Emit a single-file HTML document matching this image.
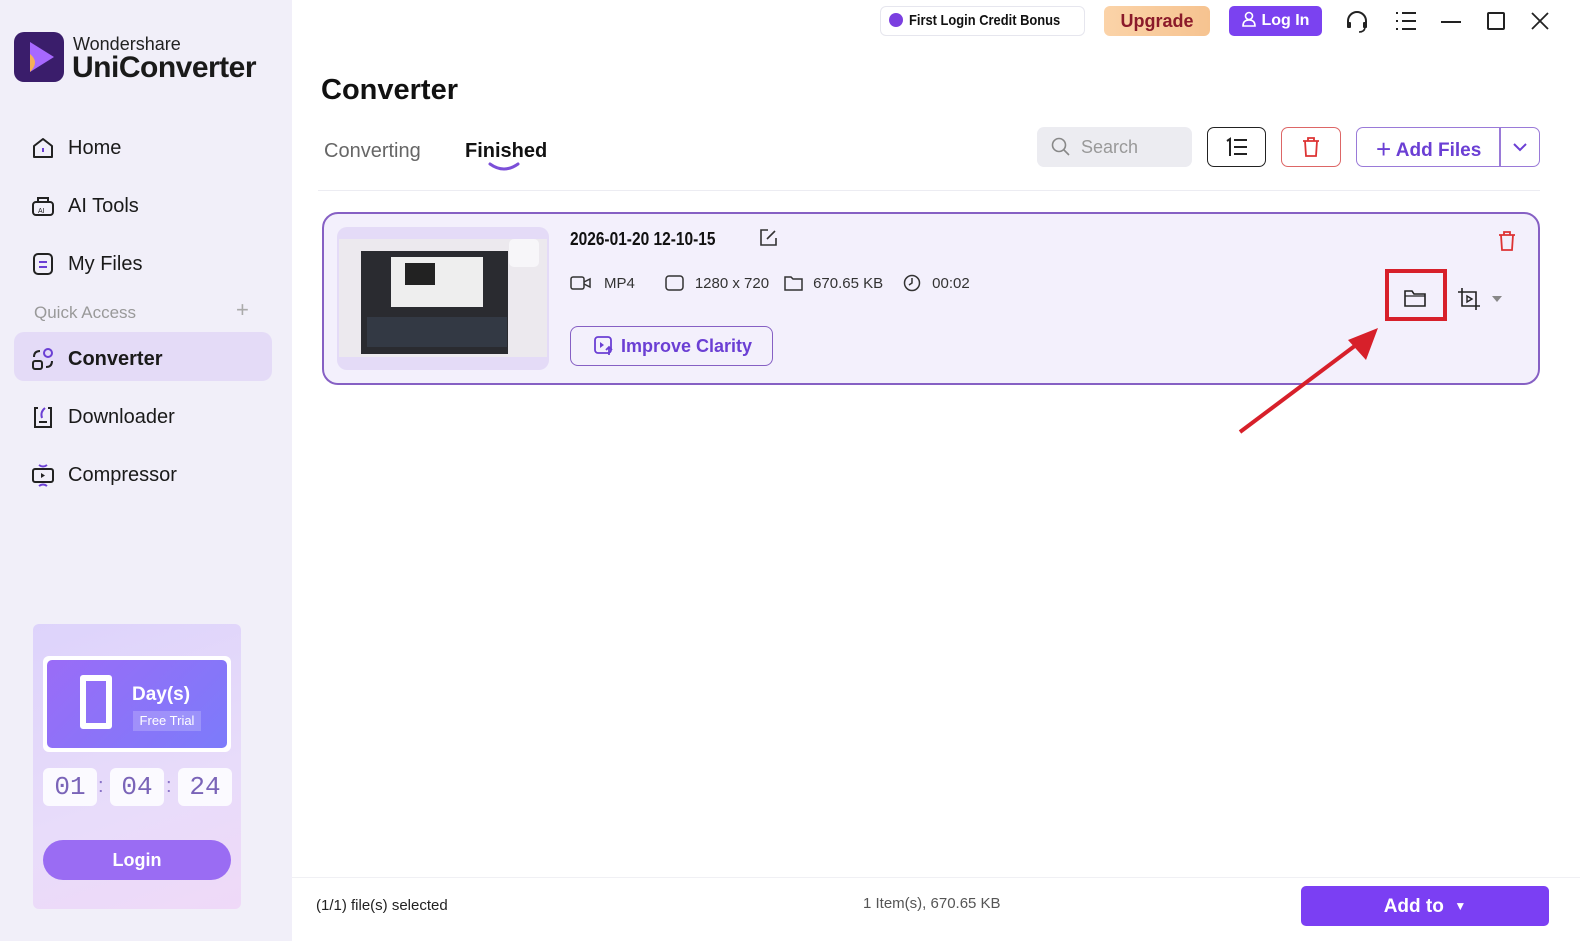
<!DOCTYPE html>
<html><head><meta charset="utf-8">
<style>
*{box-sizing:border-box;margin:0;padding:0}
body{width:1580px;height:941px;overflow:hidden;font-family:"Liberation Sans",sans-serif;background:#fff;position:relative;color:#111}
.abs{position:absolute}
#side{left:0;top:0;width:292px;height:941px;background:#f1eff9}
.nav{position:absolute;left:30px;font-size:20px;color:#1a1a1a;display:flex;align-items:center;gap:12px}
.nav svg{width:26px;height:26px}
.narrow{display:inline-block;transform:scaleX(.86);transform-origin:left center;white-space:nowrap}
</style></head><body>
<div id="side" class="abs">
  <div class="abs" style="left:14px;top:32px;width:50px;height:50px;border-radius:10px;background:#3a1d6b">
    <svg width="50" height="50" viewBox="0 0 50 50"><path d="M16 10 L40 25 L16 40 Z" fill="#a768ff"/><path d="M16 22 Q26 30 16 40 Z" fill="#f5b057"/></svg>
  </div>
  <div class="abs" style="left:73px;top:34px;font-size:18px;color:#222">Wondershare</div>
  <div class="abs" style="left:72px;top:51px;font-size:30px;font-weight:bold;color:#1a1a1a;letter-spacing:-0.5px">UniConverter</div>

  <div class="nav" style="top:135px"><svg viewBox="0 0 26 26"><path d="M4 11 L13 4 L22 11 V22 H4 Z" fill="none" stroke="#222" stroke-width="2" stroke-linejoin="round"/><path d="M13 13v4" stroke="#6b3fd4" stroke-width="2"/></svg>Home</div>
  <div class="nav" style="top:193px"><svg viewBox="0 0 26 26"><rect x="3" y="9" width="20" height="13" rx="3" fill="none" stroke="#222" stroke-width="2"/><path d="M8 9V5h10v4" fill="none" stroke="#222" stroke-width="2"/><text x="8" y="20" font-size="7" fill="#222" font-family="Liberation Sans">AI</text></svg>AI Tools</div>
  <div class="nav" style="top:251px"><svg viewBox="0 0 26 26"><rect x="4" y="3" width="18" height="20" rx="4" fill="none" stroke="#222" stroke-width="2"/><path d="M9 11h8M9 16h8" stroke="#6b3fd4" stroke-width="2"/></svg>My Files</div>
  <div class="abs" style="left:34px;top:303px;font-size:17px;color:#999">Quick Access</div>
  <div class="abs" style="left:236px;top:297px;font-size:22px;color:#aaa">+</div>
  <div class="abs" style="left:14px;top:332px;width:258px;height:49px;border-radius:10px;background:#e4dbf7"></div>
  <div class="nav" style="top:346px;font-weight:bold"><svg viewBox="0 0 26 26"><circle cx="18" cy="7" r="4" fill="none" stroke="#6b3fd4" stroke-width="2"/><rect x="3" y="15" width="9" height="8" rx="2" fill="none" stroke="#222" stroke-width="2"/><path d="M4 11 Q4 5 10 5M22 15 Q22 21 16 21" fill="none" stroke="#222" stroke-width="2"/></svg>Converter</div>
  <div class="nav" style="top:404px"><svg viewBox="0 0 26 26"><path d="M8 4H5v19h16V4h-3" fill="none" stroke="#222" stroke-width="2"/><path d="M15 4 Q10 8 12 14" fill="none" stroke="#6b3fd4" stroke-width="2"/><path d="M9 18h8" stroke="#222" stroke-width="2"/></svg>Downloader</div>
  <div class="nav" style="top:462px"><svg viewBox="0 0 26 26"><rect x="3" y="7" width="20" height="13" rx="2" fill="none" stroke="#222" stroke-width="2"/><path d="M11 11v5l4-2.5z" fill="#222"/><path d="M9 3 Q13 6 17 3M9 24 Q13 21 17 24" fill="none" stroke="#6b3fd4" stroke-width="2"/></svg>Compressor</div>

  <div class="abs" style="left:33px;top:624px;width:208px;height:285px;border-radius:6px;background:linear-gradient(160deg,#ddd3fb,#e8dcfa 60%,#efd9f8)"></div>
  <div class="abs" style="left:43px;top:656px;width:188px;height:96px;border-radius:6px;background:#fff;padding:4px">
    <div style="width:100%;height:100%;border-radius:5px;background:linear-gradient(135deg,#9a6cf7,#7c7bfa)"></div>
  </div>
  <div class="abs" style="left:80px;top:675px;width:32px;height:54px;border:6px solid #fff;border-radius:3px"></div>
  <div class="abs" style="left:132px;top:684px;font-size:19px;font-weight:bold;color:#fff">Day(s)</div>
  <div class="abs" style="left:133px;top:711px;width:68px;height:20px;background:rgba(255,255,255,.2);font-size:13px;color:#fff;text-align:center;line-height:20px">Free Trial</div>
  <div class="abs" style="left:43px;top:768px;width:54px;height:38px;border-radius:6px;background:#fbfaff;font-family:'Liberation Mono',monospace;font-size:26px;color:#7a64b8;text-align:center;line-height:38px">01</div>
  <div class="abs" style="left:98px;top:775px;font-size:20px;color:#8a74c8">:</div>
  <div class="abs" style="left:110px;top:768px;width:54px;height:38px;border-radius:6px;background:#fbfaff;font-family:'Liberation Mono',monospace;font-size:26px;color:#7a64b8;text-align:center;line-height:38px">04</div>
  <div class="abs" style="left:166px;top:775px;font-size:20px;color:#8a74c8">:</div>
  <div class="abs" style="left:178px;top:768px;width:54px;height:38px;border-radius:6px;background:#fbfaff;font-family:'Liberation Mono',monospace;font-size:26px;color:#7a64b8;text-align:center;line-height:38px">24</div>
  <div class="abs" style="left:43px;top:840px;width:188px;height:40px;border-radius:20px;background:#9a6cf3;color:#fff;font-weight:bold;font-size:18px;text-align:center;line-height:40px">Login</div>
</div>

<!-- top bar -->
<div class="abs" style="left:880px;top:6px;width:205px;height:30px;border:1px solid #e6e6ee;border-radius:6px;font-size:15px;font-weight:bold;line-height:28px;padding-left:8px;white-space:nowrap;overflow:hidden"><span style="display:inline-block;width:14px;height:14px;border-radius:7px;background:#7b3fe0;vertical-align:-2px;margin-right:6px"></span><span style="display:inline-block;transform:scaleX(.86);transform-origin:left center;white-space:nowrap;vertical-align:top">First Login Credit Bonus</span></div>
<div class="abs" style="left:1104px;top:6px;width:106px;height:30px;border-radius:6px;background:linear-gradient(90deg,#fbd3a8,#f6c390);color:#8b1a2a;font-weight:bold;font-size:18px;text-align:center;line-height:30px">Upgrade</div>
<div class="abs" style="left:1229px;top:6px;width:93px;height:30px;border-radius:5px;background:#7b42f0;color:#fff;font-weight:bold;font-size:16px;line-height:30px;padding-left:12px;white-space:nowrap">
<svg width="16" height="16" viewBox="0 0 16 16" style="vertical-align:-2px"><circle cx="8" cy="5" r="3.5" fill="none" stroke="#fff" stroke-width="1.6"/><path d="M2 15 Q2 9 8 9 Q14 9 14 15 Z" fill="none" stroke="#fff" stroke-width="1.6"/></svg> Log In</div>
<svg class="abs" style="left:1344px;top:9px" width="26" height="26" viewBox="0 0 26 26"><path d="M4 15 V12 A9 9 0 0 1 22 12 V15" fill="none" stroke="#222" stroke-width="2"/><rect x="3" y="13" width="4" height="6" rx="1" fill="#222"/><rect x="19" y="13" width="4" height="6" rx="1" fill="#222"/><path d="M21 19 Q20 23 15 23" fill="none" stroke="#222" stroke-width="1.6"/></svg>
<svg class="abs" style="left:1394px;top:10px" width="24" height="22" viewBox="0 0 24 22"><path d="M2 3h2M2 11h2M2 19h2M8 3h14M8 11h14M8 19h14" stroke="#222" stroke-width="2"/></svg>
<div class="abs" style="left:1441px;top:21px;width:20px;height:2px;background:#222"></div>
<div class="abs" style="left:1487px;top:12px;width:18px;height:18px;border:2px solid #222;border-radius:2px"></div>
<svg class="abs" style="left:1530px;top:11px" width="20" height="20" viewBox="0 0 20 20"><path d="M2 2L18 18M18 2L2 18" stroke="#222" stroke-width="1.8"/></svg>

<div class="abs" style="left:321px;top:74px;font-size:29px;font-weight:bold">Converter</div>
<div class="abs" style="left:324px;top:140px;font-size:20px;color:#666">Converting</div>
<div class="abs" style="left:465px;top:140px;font-size:20px;font-weight:bold">Finished</div>
<svg class="abs" style="left:488px;top:162px" width="32" height="10" viewBox="0 0 32 10"><path d="M2 2 Q16 12 30 2" fill="none" stroke="#7b4fd8" stroke-width="3" stroke-linecap="round"/></svg>
<div class="abs" style="left:318px;top:190px;width:1222px;height:1px;background:#ececf2"></div>

<div class="abs" style="left:1037px;top:127px;width:155px;height:40px;border-radius:7px;background:#ececf1;font-size:18px;color:#999;line-height:40px;padding-left:44px">Search</div>
<svg class="abs" style="left:1051px;top:137px" width="20" height="20" viewBox="0 0 20 20"><circle cx="8" cy="8" r="6.5" fill="none" stroke="#888" stroke-width="1.6"/><path d="M13 13l5 5" stroke="#888" stroke-width="1.6"/></svg>
<div class="abs" style="left:1207px;top:127px;width:59px;height:40px;border-radius:7px;border:1.5px solid #222"></div>
<svg class="abs" style="left:1224px;top:136px" width="26" height="22" viewBox="0 0 26 22"><path d="M3 5l3-2v17" fill="none" stroke="#222" stroke-width="2"/><path d="M10 4h13M10 11h13M10 18h13" stroke="#222" stroke-width="2"/></svg>
<div class="abs" style="left:1281px;top:127px;width:60px;height:40px;border-radius:7px;border:1.5px solid #d66"></div>
<svg class="abs" style="left:1300px;top:136px" width="22" height="22" viewBox="0 0 22 22"><path d="M3 5h16M8 5V2h6v3M5 5l1 15h10l1-15" fill="none" stroke="#d33" stroke-width="1.8"/></svg>
<div class="abs" style="left:1356px;top:127px;width:184px;height:40px;border-radius:7px;border:1.5px solid #9a7ad8"></div>
<div class="abs" style="left:1499px;top:128px;width:1.5px;height:38px;background:#9a7ad8"></div>
<div class="abs" style="left:1376px;top:134px;font-size:19px;font-weight:bold;color:#6b3fd4"><span style="font-size:26px;font-weight:normal;vertical-align:-2px">+</span> Add Files</div>
<svg class="abs" style="left:1512px;top:141px" width="16" height="12" viewBox="0 0 16 12"><path d="M2 3l6 6 6-6" fill="none" stroke="#6b3fd4" stroke-width="2"/></svg>

<!-- card -->
<div class="abs" style="left:322px;top:212px;width:1218px;height:173px;border-radius:16px;border:2px solid #8660c4;background:#f3f0fc"></div>
<div class="abs" style="left:337px;top:227px;width:212px;height:143px;border-radius:10px;background:#e4dbf7;overflow:hidden">
  <div class="abs" style="left:2px;top:12px;width:208px;height:118px;background:#ece9ee"></div>
  <div class="abs" style="left:24px;top:24px;width:147px;height:103px;background:#2a2b30"></div>
  <div class="abs" style="left:54px;top:30px;width:92px;height:50px;background:#eee"></div>
  <div class="abs" style="left:68px;top:36px;width:30px;height:22px;background:#222"></div>
  <div class="abs" style="left:30px;top:90px;width:140px;height:30px;background:#333944"></div>
  <div class="abs" style="left:172px;top:12px;width:30px;height:28px;border-radius:5px;background:#f7f6f9"></div>
</div>
<div class="abs" style="left:570px;top:229px;font-size:18px;font-weight:bold"><span class="narrow">2026-01-20 12-10-15</span></div>
<svg class="abs" style="left:758px;top:228px" width="20" height="20" viewBox="0 0 20 20"><path d="M10 2H3v15h15v-7" fill="none" stroke="#333" stroke-width="1.6"/><path d="M9 11L17 3" stroke="#333" stroke-width="1.6"/></svg>
<div class="abs" style="left:570px;top:274px;font-size:15px;color:#333;display:flex;align-items:center;white-space:nowrap">
<svg width="22" height="16" viewBox="0 0 22 16"><rect x="1" y="2" width="13" height="12" rx="2" fill="none" stroke="#333" stroke-width="1.5"/><path d="M14 7l6-3v8l-6-3" fill="none" stroke="#333" stroke-width="1.5"/></svg>
<span style="margin-left:12px">MP4</span>
<svg style="margin-left:30px" width="20" height="16" viewBox="0 0 20 16"><rect x="1" y="1" width="17" height="14" rx="3" fill="none" stroke="#333" stroke-width="1.5"/></svg>
<span style="margin-left:10px">1280 x 720</span>
<svg style="margin-left:15px" width="20" height="16" viewBox="0 0 20 16"><path d="M1 2h6l2 2h9v11H1z" fill="none" stroke="#333" stroke-width="1.5"/></svg>
<span style="margin-left:9px">670.65 KB</span>
<svg style="margin-left:20px" width="18" height="18" viewBox="0 0 18 18"><circle cx="9" cy="9" r="7.5" fill="none" stroke="#333" stroke-width="1.5"/><path d="M9 4v5l-3 2" fill="none" stroke="#333" stroke-width="1.5"/></svg>
<span style="margin-left:11px">00:02</span>
</div>
<div class="abs" style="left:570px;top:326px;width:203px;height:40px;border-radius:8px;border:1.5px solid #8660c4;color:#6b3fd4;font-weight:bold;font-size:18px;line-height:38px;padding-left:50px">Improve Clarity</div>
<svg class="abs" style="left:594px;top:336px" width="20" height="20" viewBox="0 0 20 20"><rect x="1" y="1" width="16" height="16" rx="3" fill="none" stroke="#6b3fd4" stroke-width="1.8"/><path d="M6 6v6l4-3z" fill="#6b3fd4"/><path d="M15 19v-7M12 14l3-3 3 3" fill="none" stroke="#6b3fd4" stroke-width="1.8"/></svg>
<svg class="abs" style="left:1496px;top:230px" width="22" height="22" viewBox="0 0 22 22"><path d="M3 5h16M8 5V2h6v3M5 5l1 15h10l1-15" fill="none" stroke="#d33" stroke-width="1.8"/></svg>
<div class="abs" style="left:1385px;top:269px;width:62px;height:52px;border:4px solid #d7202a"></div>
<svg class="abs" style="left:1403px;top:288px" width="24" height="20" viewBox="0 0 24 20"><path d="M2 3h7l2 3h11v12H2z" fill="none" stroke="#222" stroke-width="1.6"/><path d="M2 8h20" stroke="#222" stroke-width="1.2"/></svg>
<svg class="abs" style="left:1457px;top:287px" width="26" height="24" viewBox="0 0 26 24"><path d="M5 1v18h18M1 5h18v18" fill="none" stroke="#222" stroke-width="1.6"/><path d="M10 9v6l5-3z" fill="none" stroke="#222" stroke-width="1.4"/></svg>
<svg class="abs" style="left:1491px;top:295px" width="12" height="8" viewBox="0 0 12 8"><path d="M1 1h10L6 7z" fill="#888"/></svg>
<svg class="abs" style="left:1230px;top:320px" width="160" height="120" viewBox="0 0 160 120"><path d="M10 112 L130 22" stroke="#d7202a" stroke-width="4"/><path d="M148 8 L118 20 L136 40 Z" fill="#d7202a"/></svg>

<!-- footer -->
<div class="abs" style="left:292px;top:877px;width:1288px;height:1px;background:#f0f0f4"></div>
<div class="abs" style="left:316px;top:897px;font-size:15px;color:#222">(1/1) file(s) selected</div>
<div class="abs" style="left:863px;top:895px;font-size:15px;color:#555">1 Item(s), 670.65 KB</div>
<div class="abs" style="left:1301px;top:886px;width:248px;height:40px;border-radius:5px;background:#7b3ff3;color:#fff;font-weight:bold;font-size:19px;line-height:40px;text-align:center">Add to &nbsp;<span style="font-size:12px;vertical-align:2px">▼</span></div>
</body></html>
